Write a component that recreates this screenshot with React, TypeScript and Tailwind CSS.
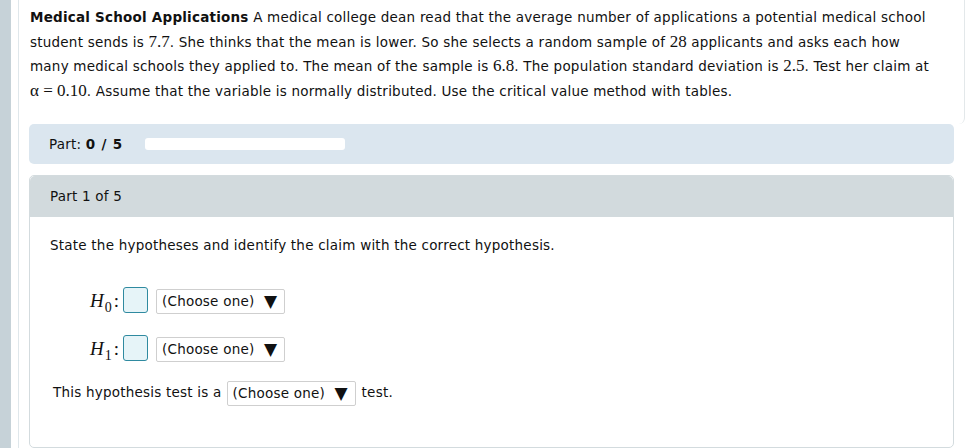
import React from "react";

const sans = { fontFamily: '"DejaVu Sans", Verdana, sans-serif' };

function Num({ children }: { children: React.ReactNode }) {
  return (
    <span className="font-['Liberation_Serif',serif] text-[17px] tracking-normal">{children}</span>
  );
}

function Choose() {
  return (
    <span className="inline-flex h-[25px] w-[129px] items-center justify-between rounded-[2px] border border-[#cfcfcf] bg-white pl-[5px] pr-[7px] text-[13.5px] text-[#111]">
      <span>(Choose one)</span>
      <span className="text-[17px] leading-none tracking-normal">▼</span>
    </span>
  );
}

function HypRow({ sub }: { sub: string }) {
  return (
    <div className="flex h-[26px] items-center">
      <span className="w-[35px] pl-[40px] font-['Liberation_Serif',serif] text-[19px] italic leading-none tracking-normal text-[#111]">
        <span className="whitespace-nowrap">
          H<span className="relative top-[5px] ml-[1px] text-[14px] not-italic">{sub}</span>
          <span className="ml-[2px] not-italic">:</span>
        </span>
      </span>
      <span className="ml-[33px] h-[26px] w-[25px] rounded-[3px] border border-[#2f8aa0] bg-[#e6f4f8]" />
      <span className="ml-[8px] mt-[3px]">
        <Choose />
      </span>
    </div>
  );
}

export default function App() {
  return (
    <div
      className="flex h-[448px] w-[967px] overflow-hidden bg-white tracking-[0.22px] text-[#111]"
      style={sans}
    >
      <div className="w-[11px] shrink-0 bg-[#c6d2d8]" />
      <div className="ml-[7px] flex-1 border-l border-[#dfe7eb] pl-[10px]">
        <div className="w-[936px] rounded-br-[6px] border-r border-[#e3e8ea] pb-[21px] pl-[1px] pt-[6px] text-[13.5px] leading-[23.5px] whitespace-nowrap">
          <b>Medical School Applications</b> A medical college dean read that the average number of applications a potential medical school
          <br />
          student sends is <Num>7.7</Num>. She thinks that the mean is lower. So she selects a random sample of <Num>28</Num> applicants and asks each how
          <br />
          many medical schools they applied to. The mean of the sample is <Num>6.8</Num>. The population standard deviation is <Num>2.5</Num>. Test her claim at
          <br />
          <Num>α = 0.10</Num>. Assume that the variable is normally distributed. Use the critical value method with tables.
        </div>

        <div className="flex h-[40px] w-[925px] items-center rounded-[5px] bg-[#dbe6ef] pl-[20px] text-[13.5px]">
          <span>
            Part: <b className="tracking-[0.8px]">0 / 5</b>
          </span>
          <span className="ml-[22px] h-[12px] w-[200px] rounded-[3px] bg-white" />
        </div>

        <div className="mt-[11px] h-[273px] w-[925px] rounded-[5px] border border-[#d3dbde]">
          <div className="flex h-[41px] items-center rounded-t-[5px] bg-[#d2dadd] pl-[20px] text-[13.5px]">
            Part 1 of 5
          </div>
          <div className="pl-[20px] pt-[19px] text-[13.5px]">
            <div className="leading-[18px]">State the hypotheses and identify the claim with the correct hypothesis.</div>
            <div className="mt-[33px] flex flex-col gap-[22px]">
              <HypRow sub="0" />
              <HypRow sub="1" />
            </div>
            <div className="ml-[3px] mt-[18px] flex items-center">
              <span>This hypothesis test is a</span>
              <span className="ml-[5px] mt-[2px]">
                <Choose />
              </span>
              <span className="ml-[6px]">test.</span>
            </div>
          </div>
        </div>
      </div>
    </div>
  );
}
